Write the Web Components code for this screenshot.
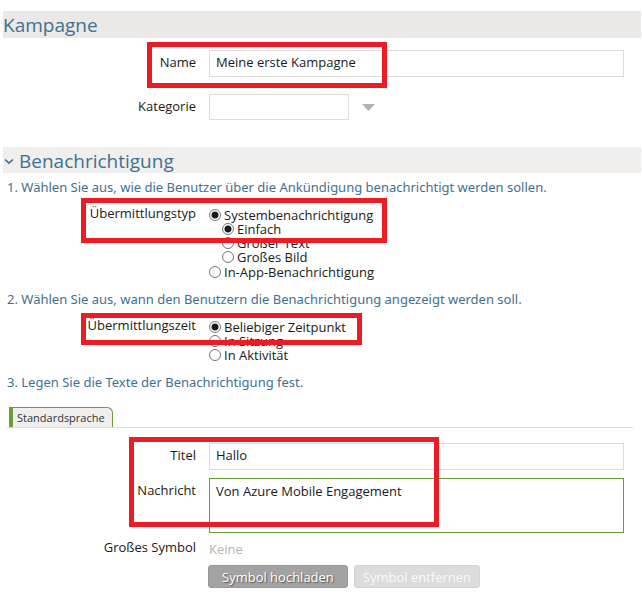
<!DOCTYPE html>
<html lang="de">
<head>
<meta charset="utf-8">
<title>Kampagne</title>
<style>
  body { margin: 0; background: #fff; color: #1a1a1a; font: 13px/18px "Open Sans", "Noto Sans", sans-serif; }
</style>
</head>
<body>
<campaign-page></campaign-page>
<script>
const define = (name, html, setup) => customElements.define(name, class extends HTMLElement {
  connectedCallback() {
    if (this.shadowRoot) return;
    const root = this.attachShadow({ mode: "open" });
    const template = document.createElement("template");
    template.innerHTML = html;
    root.append(template.content.cloneNode(true));
    if (setup) setup(this, root);
  }
});

const rowStyle = `
  :host { display: block; }
  * { box-sizing: border-box; }
  .row { display: grid; grid-template-columns: 196px minmax(0, 1fr); column-gap: 13px; padding-right: 18px; }
  .label { text-align: right; padding-top: 3px; white-space: nowrap; }
  input, textarea, select { font: inherit; color: inherit; background: #fff; border: 1px solid #dcdcdc; border-radius: 0; margin: 0; outline: none; }`;

define("section-header", `
  <style>
    :host { display: block; margin: 0 1px 0 3px; background: var(--bar, #eae9e7); }
    h2 { margin: 0; display: flex; align-items: center; gap: 5px; font-size: 19px; line-height: 25px; padding-top: 2px; font-weight: 400; color: #41708f; }
    :host([expanded]) h2 { line-height: 24px; }
    svg { margin-left: 1px; }
    svg[hidden] { display: none; }
  </style>
  <h2><svg width="10" height="8" viewBox="0 0 10 8" fill="none" stroke="#41708f" stroke-width="1.7" aria-hidden="true"><path d="M1 2.5 5 6.2 9 2.5"/></svg><slot></slot></h2>`,
  (host, root) => { root.querySelector("svg").toggleAttribute("hidden", !host.hasAttribute("expanded")); });

define("step-text", `
  <style>
    :host { display: block; }
    p { margin: 0; padding: 0 7px; font: 13px/28px "Noto Sans", "Open Sans", sans-serif; color: #41708f; }
  </style>
  <p><slot></slot></p>`);

define("mark-box", `
  <style>
    :host { display: block; position: relative; }
    .frame { position: absolute; box-sizing: border-box; border: 5px solid #ed1c24; pointer-events: none; }
  </style>
  <slot></slot><div class="frame"></div>`,
  (host, root) => {
    const [left, top, width, height] = host.getAttribute("area").split(" ");
    Object.assign(root.querySelector(".frame").style,
      { left: left + "px", top: top + "px", width: width + "px", height: height + "px" });
  });

define("text-field", `
  <style>${rowStyle}
    input { width: 100%; height: 27px; padding: 0 6px 3px; }
  </style>
  <div class="row"><label class="label" for="f"></label><input id="f" type="text"></div>`,
  (host, root) => {
    root.querySelector("label").textContent = host.getAttribute("label");
    root.querySelector("input").value = host.getAttribute("value");
  });

define("area-field", `
  <style>${rowStyle}
    textarea { display: block; width: 100%; height: 55px; padding: 3px 6px; border-color: #689f38; resize: none; }
  </style>
  <div class="row"><label class="label" for="f"></label><textarea id="f"></textarea></div>`,
  (host, root) => {
    root.querySelector("label").textContent = host.getAttribute("label");
    root.querySelector("textarea").value = host.getAttribute("value");
  });

define("select-field", `
  <style>${rowStyle}
    .control { display: flex; align-items: center; gap: 13px; }
    select { appearance: none; width: 140px; height: 26px; }
  </style>
  <div class="row"><label class="label" for="f"></label><div class="control"><select id="f"><option></option></select>
    <svg width="13" height="7" viewBox="0 0 13 7" fill="#b3b3b3" aria-hidden="true"><path d="M0 0H13L6.5 7Z"/></svg></div></div>`,
  (host, root) => { root.querySelector("label").textContent = host.getAttribute("label"); });

define("radio-field", `
  <style>${rowStyle}
    .label { padding-top: 0; line-height: 12px; }
    .options { display: flex; flex-direction: column; padding-top: 1px; }
    .option { display: flex; align-items: center; gap: 3px; height: 14px; line-height: 14px; white-space: nowrap; }
    .option.nested { padding-left: 13px; }
    .option.nested + .option:not(.nested) { margin-top: 1px; }
    input { appearance: none; flex: none; width: 12px; height: 12px; border: 1px solid #767676; border-radius: 50%; }
    input:checked { background: radial-gradient(circle, #1a1a1a 3px, #fff 4px); }
  </style>
  <div class="row" role="group" aria-labelledby="g"><span class="label" id="g"></span><div class="options"></div></div>`,
  (host, root) => {
    root.querySelector("#g").textContent = host.getAttribute("label");
    host.getAttribute("options").split("|").forEach(entry => {
      const nested = entry.includes(">"), checked = entry.includes("*");
      const option = document.createElement("label");
      option.className = nested ? "option nested" : "option";
      const input = document.createElement("input");
      input.type = "radio";
      input.name = nested ? "inner" : "outer";
      input.checked = checked;
      option.append(input, entry.replace(/[>*]/g, ""));
      root.querySelector(".options").append(option);
    });
  });

define("tab-bar", `
  <style>
    :host { display: block; margin: 0 9px 0 7px; padding-left: 2px; border-bottom: 1px solid #dcdcdc; }
    button { display: block; height: 20px; margin: 0; padding: 0 7px 0 4px; font: 500 11px/18px "Open Sans", "Noto Sans", sans-serif; color: #333; background: #f0efed; border: 1px solid #689f38; border-left-width: 4px; border-bottom: 0; border-radius: 0 6px 0 0; }
  </style>
  <button type="button" role="tab" aria-selected="true"><slot></slot></button>`);

define("symbol-field", `
  <style>${rowStyle}
    .row { padding-top: 2px; }
    .none { color: #b5b5b5; line-height: 18px; padding: 5px 0 7px; }
    .buttons { display: flex; gap: 6px; margin-left: -1px; }
    button { height: 23px; padding: 0 13px; font: inherit; line-height: 20px; white-space: nowrap; border: 1px solid #999; border-radius: 3px; color: #fff; background: #a3a3a3; text-shadow: 1px 1px 1px #555; }
    button:disabled { color: #fafafa; background: #dcdcdc; border-color: #d4d4d4; padding: 0 8px; text-shadow: none; }
  </style>
  <div class="row"><span class="label">Großes Symbol</span><div><div class="none">Keine</div>
    <div class="buttons"><button type="button">Symbol hochladen</button><button type="button" disabled>Symbol entfernen</button></div></div></div>`);

define("campaign-page", `
  <style>
    :host { display: block; padding: 11px 0 19px; }
    .fields { display: flex; flex-direction: column; gap: 17px; padding: 12px 0 27px; }
    .radios { padding: 6px 0; }
    .tabs { padding-top: 11px; }
    .texts { display: flex; flex-direction: column; gap: 8px; padding-top: 15px; }
    .light { --bar: #f0efed; }
  </style>
  <section-header>Kampagne</section-header>
  <div class="fields">
    <mark-box area="147 -8 240 46"><text-field label="Name" value="Meine erste Kampagne"></text-field></mark-box>
    <select-field label="Kategorie"></select-field>
  </div>
  <section-header class="light" expanded>Benachrichtigung</section-header>
  <step-text>1. Wählen Sie aus, wie die Benutzer über die Ankündigung benachrichtigt werden sollen.</step-text>
  <div class="radios"><mark-box area="81 -9 306 45"><radio-field label="Übermittlungstyp" options="*Systembenachrichtigung|>*Einfach|>Großer Text|>Großes Bild|In-App-Benachrichtigung"></radio-field></mark-box></div>
  <step-text>2. Wählen Sie aus, wann den Benutzern die Benachrichtigung angezeigt werden soll.</step-text>
  <div class="radios"><mark-box area="81 -6 281 32"><radio-field label="Übermittlungszeit" options="*Beliebiger Zeitpunkt|In Sitzung|In Aktivität"></radio-field></mark-box></div>
  <step-text>3. Legen Sie die Texte der Benachrichtigung fest.</step-text>
  <div class="tabs"><tab-bar>Standardsprache</tab-bar></div>
  <mark-box area="129 9 310 90"><div class="texts">
    <text-field label="Titel" value="Hallo"></text-field>
    <area-field label="Nachricht" value="Von Azure Mobile Engagement"></area-field>
  </div></mark-box>
  <symbol-field></symbol-field>`);
</script>
</body>
</html>
